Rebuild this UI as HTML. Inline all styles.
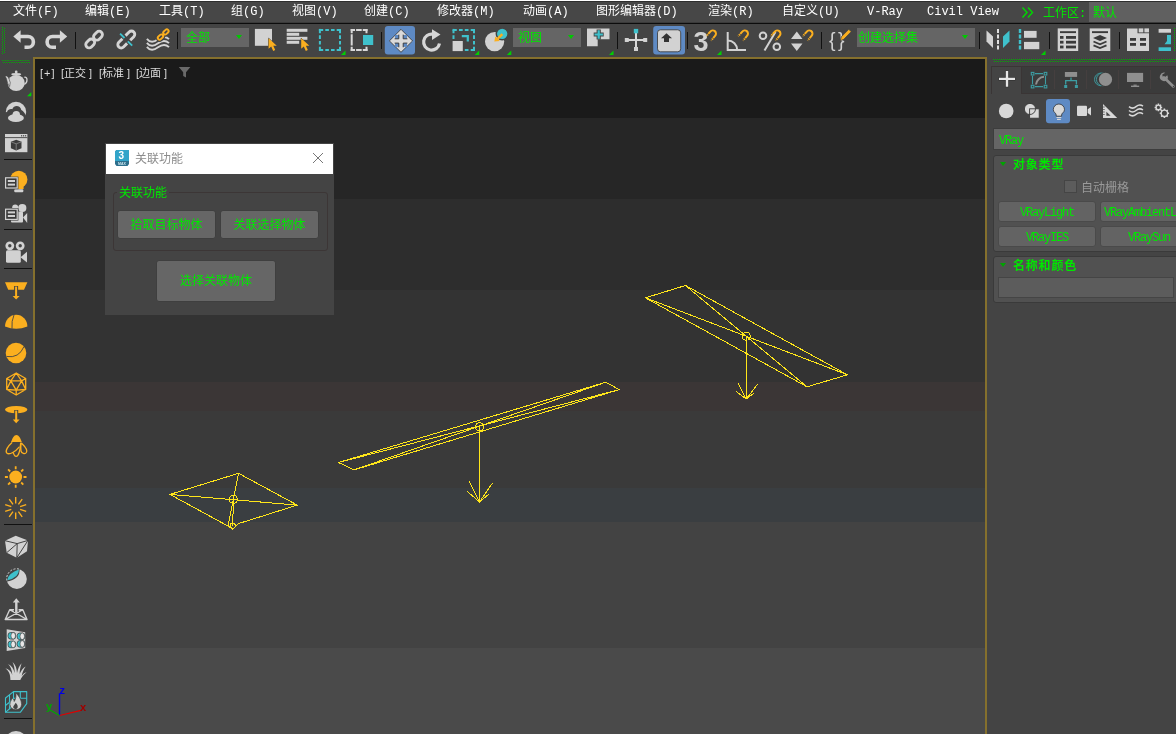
<!DOCTYPE html>
<html lang="zh-CN"><head><meta charset="utf-8"><title>3ds Max</title>
<style>
html,body{margin:0;padding:0;}
body{width:1176px;height:734px;overflow:hidden;background:#444;position:relative;
 font-family:"Liberation Mono","Noto Sans CJK SC",monospace;font-size:12px;color:#e6e6e6;line-height:14px;}
.abs{position:absolute;}
#menubar{position:absolute;left:0;top:0;width:1176px;height:22px;background:#474747;border-top:1px solid #fff;box-sizing:border-box;box-shadow:inset 0 1px 0 #2e2e2e;}
#menubar span{position:absolute;top:4px;white-space:nowrap;color:#fff;}
#menuline{position:absolute;left:0;top:22px;width:1176px;height:3px;background:linear-gradient(#3a3a3a 0 1px,#0c0c0c 1px 2px,#3c3c3c 2px 3px);}
#toolbar{position:absolute;left:0;top:24px;width:1176px;height:33px;background:#444;}
.sep{position:absolute;top:32px;width:1px;height:17px;background:#111;}
.dd{position:absolute;top:28px;height:19px;background:#656565;color:#00e800;box-sizing:border-box;padding:4px 0 0 5px;white-space:nowrap;line-height:14px;}
.dd i{position:absolute;right:7px;top:7px;border-left:3px solid transparent;border-right:3px solid transparent;border-top:4px solid #00c800;}
.tri{position:absolute;width:0;height:0;border-left:5px solid transparent;border-bottom:5px solid #00d000;}
#vpborder{position:absolute;left:33px;top:57px;width:954px;height:700px;background:#85702d;}
#vp{position:absolute;left:35px;top:59px;width:950px;height:675px;background:#1a1a1a;overflow:hidden;}
.band{position:absolute;left:0;width:950px;}
#leftbar{position:absolute;left:0;top:57px;width:33px;height:677px;background:#444;}
.hsep{position:absolute;left:4px;width:28px;height:1px;background:#111;}
#rpanel{position:absolute;left:987px;top:57px;width:189px;height:677px;background:#444;}
.g{color:#00e800;}
.btn{position:absolute;background:#636363;border:1px solid #4a4a4a;border-radius:3px;box-sizing:border-box;color:#00e800;text-align:center;white-space:nowrap;overflow:hidden;}
.sim{letter-spacing:-1.2px;}
#root{position:absolute;left:0;top:0;width:1176px;height:734px;will-change:transform;}
</style></head><body><div id="root">
<!-- MENU -->
<div id="menubar">
<span style="left:13px">文件(F)</span><span style="left:85px">编辑(E)</span><span style="left:159px">工具(T)</span><span style="left:231px">组(G)</span><span style="left:292px">视图(V)</span><span style="left:364px">创建(C)</span><span style="left:437px">修改器(M)</span><span style="left:523px">动画(A)</span><span style="left:596px">图形编辑器(D)</span><span style="left:708px">渲染(R)</span><span style="left:782px">自定义(U)</span><span style="left:867px">V-Ray</span><span style="left:927px">Civil View</span><svg class="abs" style="left:1021px;top:5px" width="14" height="13" viewBox="0 0 14 13"><path d="M1.500 1.500 L6 6.500 L1.500 11.500 M7 1.500 L11.500 6.500 L7 11.500" fill="none" stroke="#00d800" stroke-width="1.400"/></svg><span style="left:1043px;top:6px;color:#00e800">工作区:</span>
<div class="abs" style="left:1089px;top:1px;width:87px;height:20px;background:#606060"></div><span style="left:1093px;top:6px;color:#00e800">默认</span>
</div>
<div id="menuline"></div>
<div id="toolbar"></div>
<!-- TOOLBAR -->
<div id="tb">
<svg class="abs" style="left:0;top:0" width="1176" height="60" viewBox="0 0 1176 60">
<defs>
<path id="cur" d="M0 0 L0 10.5 L2.6 8.2 L4.6 12.6 L6.6 11.7 L4.7 7.4 L8.2 7.4 Z" fill="#fbaf1f"/>
<g id="mag" fill="none" stroke="#fbaf1f" stroke-width="2"><path d="M-3.2 2 V-1.2 A3.2 3.2 0 0 1 3.2 -1.2 V2"/><path d="M-3.2 2.6 V5.2 M3.2 2.6 V5.2" stroke-dasharray="1.3 1"/></g>
<path id="gt" d="M0 4.5 L4.5 0 V4.5 Z" fill="#00d000"/>
</defs>
<!-- grips -->
<g fill="#00b000">
<path d="M2 27h1v1h-1zM2 29h1v1h-1zM2 31h1v1h-1zM2 33h1v1h-1zM2 35h1v1h-1zM2 37h1v1h-1zM2 39h1v1h-1zM2 41h1v1h-1zM2 43h1v1h-1zM2 45h1v1h-1zM2 47h1v1h-1zM2 49h1v1h-1zM2 51h1v1h-1zM2 53h1v1h-1z"/>
<path d="M4 28h1v1h-1zM4 30h1v1h-1zM4 32h1v1h-1zM4 34h1v1h-1zM4 36h1v1h-1zM4 38h1v1h-1zM4 40h1v1h-1zM4 42h1v1h-1zM4 44h1v1h-1zM4 46h1v1h-1zM4 48h1v1h-1zM4 50h1v1h-1zM4 52h1v1h-1z"/>
</g>
<!-- undo / redo -->
<g fill="none" stroke="#d6d6d6" stroke-width="3.6">
<path d="M19 36.5 H28 a5.4 5.4 0 0 1 0 10.8 H24.5"/>
<path d="M61.5 36.5 H52.500 a5.4 5.4 0 0 0 0 10.8 H56"/>
</g>
<path d="M13.3 36.5 L20.6 30.3 V42.7 Z" fill="#d6d6d6"/>
<path d="M67.200 36.5 L59.9 30.3 V42.7 Z" fill="#d6d6d6"/>
<!-- link -->
<g fill="none" stroke="#d4d4d4" stroke-width="2.900">
<g transform="translate(94.100 39.600) rotate(-45)"><rect x="-10.400" y="-3.300" width="9.800" height="6.600" rx="3.300"/><rect x="0.600" y="-3.300" width="9.800" height="6.600" rx="3.300"/></g>
</g>
<!-- unlink -->
<g fill="none" stroke="#d4d4d4" stroke-width="2.900">
<g transform="translate(126.300 39.500) rotate(-45)"><path d="M-2.200 -3.300 H-7.300 a3.300 3.300 0 0 0 0 6.600 H-2.200"/><path d="M2.200 -3.300 H7.300 a3.300 3.300 0 0 1 0 6.600 H2.200"/></g>
</g>
<path d="M120.100 33.600 L124.500 38 M127.800 41.300 L132.200 45.700" stroke="#3fc1cc" stroke-width="1.900" fill="none"/>
<!-- bind space warp -->
<g fill="none" stroke="#d4d4d4" stroke-width="1.900">
<path d="M146.900 38.800 C150 42.800 154 42.300 158 39.300 S165.500 35.800 169 39.100"/>
<path d="M146.900 42.800 C150 46.800 154 46.300 158 43.300 S165.500 39.800 169 43.100"/>
<path d="M146.900 46.800 C150 50.800 154 50.300 158 47.300 S165.500 43.800 169 47.100"/>
</g>
<g fill="none" stroke="#444" stroke-width="4.200"><g transform="translate(163.200 34.500) rotate(-43)"><rect x="-6.700" y="-1.800" width="6" height="3.600" rx="1.800"/><rect x="0.700" y="-1.800" width="6" height="3.600" rx="1.800"/></g></g>
<g fill="none" stroke="#fbaf1f" stroke-width="1.900"><g transform="translate(163.200 34.500) rotate(-43)"><rect x="-6.700" y="-1.800" width="6" height="3.600" rx="1.800"/><rect x="0.700" y="-1.800" width="6" height="3.600" rx="1.800"/></g></g>
<!-- select object -->
<rect x="254.900" y="28.900" width="17.100" height="16.900" fill="#d2d2d2"/>
<use href="#cur" x="268.600" y="38.300" stroke="#444" stroke-width="1" paint-order="stroke"/>
<!-- select by name -->
<g fill="#d2d2d2"><rect x="286.700" y="28.800" width="20.700" height="3"/><rect x="286.700" y="32.800" width="12.500" height="3"/><rect x="286.700" y="36.800" width="20.700" height="3"/><rect x="286.700" y="40.800" width="12.500" height="3"/></g>
<use href="#cur" x="301.200" y="38.300" stroke="#444" stroke-width="1" paint-order="stroke"/>
<!-- rect region -->
<rect x="319.900" y="29.900" width="20.100" height="20.100" fill="none" stroke="#3fc1cc" stroke-width="2" stroke-dasharray="3.300 2.100 3.600 2.100 3.600 2.100 6.600 2.100 3.600 2.100 3.600 2.100 6.600 2.100 3.600 2.100 3.600 2.100 6.600 2.100 3.600 2.100 3.600 2.100 3.300 0"/><rect x="318.900" y="28.900" width="2" height="2" fill="#3fc1cc"/>
<use href="#gt" x="341" y="50.500"/>
<!-- window crossing -->
<path d="M351.700 29.900 H366.500 M351.700 49.900 H366.500" fill="none" stroke="#d8d8d8" stroke-width="2" stroke-linecap="square" stroke-dasharray="2.300 3.100 3.600 3.100 2.300 0"/><path d="M351.700 29.900 V49.900 M366.500 29.900 V49.900" fill="none" stroke="#d8d8d8" stroke-width="2" stroke-linecap="square" stroke-dasharray="2.300 3.100 3.600 2.100 3.600 3.100 2.300 0"/>
<rect x="362" y="34" width="12.200" height="12" fill="#444"/>
<rect x="363" y="35" width="10.200" height="10" fill="#3fc1cc"/>
<!-- move -->
<rect x="384.800" y="26" width="30.200" height="28.600" rx="3" fill="#5e8ac4"/>
<path d="M401 29.300 L412.600 40.900 L401 52.300 L389.400 40.900 Z" fill="#dadada" stroke="#333" stroke-width="0.800"/>
<g fill="#5e8ac4"><rect x="395" y="35" width="3.800" height="3.800"/><rect x="403.200" y="35" width="3.800" height="3.800"/><rect x="395" y="43.100" width="3.800" height="3.800"/><rect x="403.200" y="43.100" width="3.800" height="3.800"/></g>
<path d="M398.800 34.600 V38.800 H394.600 M403.200 34.600 V38.800 H407.400 M398.800 47.300 V43.100 H394.600 M403.200 47.300 V43.100 H407.400" fill="none" stroke="#333" stroke-width="0.900"/>
<!-- rotate -->
<path d="M439.500 43.500 A8 8 0 1 1 433 34.200" fill="none" stroke="#d6d6d6" stroke-width="3.200"/>
<path d="M432 29.300 L440.500 34.600 L432 40 Z" fill="#d6d6d6"/>
<!-- scale -->
<rect x="453.500" y="29.900" width="20.500" height="20.100" fill="none" stroke="#3fc1cc" stroke-width="2" stroke-dasharray="3.300 2.200 3.700 2.100 3.700 2.200 6.600 2.100 3.600 2.100 3.600 2.100 6.600 2.200 3.700 2.100 3.700 2.200 6.600 2.100 3.600 2.100 3.600 2.100 3.300 0"/>
<rect x="452.500" y="28.900" width="2" height="2" fill="#3fc1cc"/><rect x="451.500" y="40" width="12.500" height="12" fill="#444"/>
<rect x="452.600" y="41" width="10.200" height="10.100" fill="#d2d2d2"/>
<path d="M461.800 36.200 H467.800 V41.600" fill="none" stroke="#3fc1cc" stroke-width="2.200"/>
<use href="#gt" x="474.700" y="50.500"/>
<!-- place -->
<circle cx="494.600" cy="41.600" r="9.600" fill="#d2d2d2"/>
<circle cx="502.200" cy="33.800" r="5.900" fill="#3fc1cc" stroke="#444" stroke-width="1.500"/>
<path d="M502.400 34.200 L497.500 38.800" stroke="#fbaf1f" stroke-width="2.400"/>
<path d="M494.300 41.600 L495.300 36.400 L499.800 40.900 Z" fill="#fbaf1f"/>
<use href="#gt" x="506.800" y="50.500"/>
<!-- pivot -->
<path d="M587 28.400 H609.500 V39.200 H597.700 V46.200 H587 Z" fill="#d2d2d2"/>
<path d="M598.700 29.500 V39.500 M593.700 34.500 H603.700" stroke="#444" stroke-width="4.200"/>
<path d="M598.700 30.300 V38.700 M594.500 34.500 H602.900" stroke="#3fc1cc" stroke-width="2.200"/>
<use href="#gt" x="609" y="50.500"/>
<!-- manipulate -->
<path d="M626 40 H646 M636 31 V50" stroke="#d8d8d8" stroke-width="2"/>
<g fill="#d2d2d2"><rect x="624.800" y="38" width="4" height="4"/><rect x="643.200" y="38" width="4" height="4"/><rect x="634" y="47" width="4" height="4"/></g>
<rect x="633.800" y="28.900" width="4.400" height="4.400" fill="#3fc1cc"/>
<!-- kbd override -->
<rect x="653.200" y="26" width="31.800" height="28.600" rx="3" fill="#5e8ac4"/>
<rect x="657.500" y="29.800" width="23.200" height="22" rx="3" fill="#d2d2d2" stroke="#333" stroke-width="0.800"/>
<path d="M666.500 33.300 L672 38.300 H669 V42 H664 V38.300 H661 Z" fill="#333"/>
<!-- snaps -->
<text x="693.600" y="50.800" font-family="Liberation Sans, sans-serif" font-weight="bold" font-size="27" fill="#d2d2d2">3</text>
<use href="#mag" transform="translate(712 34.500) rotate(40)"/>
<use href="#gt" x="717" y="50.500"/>
<path d="M727.700 32 V50 H746" fill="none" stroke="#d2d2d2" stroke-width="2"/>
<path d="M727.700 40.500 A9.500 9.500 0 0 1 737.200 50" fill="none" stroke="#d2d2d2" stroke-width="2"/>
<use href="#mag" transform="translate(744 34.500) rotate(40)"/>
<g fill="none" stroke="#d2d2d2" stroke-width="2"><circle cx="763" cy="35.800" r="3.300"/><circle cx="776.800" cy="46.700" r="3.300"/><path d="M764.500 50.500 L775.500 32"/></g>
<use href="#mag" transform="translate(776.500 34.500) rotate(40)"/>
<path d="M796.800 31.500 L802.500 39 H791 Z M796.800 51 L802.500 43.400 H791 Z" fill="#d2d2d2"/>
<use href="#mag" transform="translate(808.500 34.500) rotate(40)"/>
<!-- {} -->
<text x="829" y="46.500" font-family="Liberation Sans, sans-serif" font-size="19.500" fill="#d2d2d2" letter-spacing="2.500">{}</text>
<path d="M840.200 40.800 L841.300 36.800 L848.800 29.300 L851.200 31.700 L843.800 39.300 Z" fill="#fbaf1f" stroke="#444" stroke-width="0.800"/>
<!-- mirror -->
<path d="M986.500 30.400 L993 36.500 V48 L986.500 41.500 Z" fill="#d2d2d2"/>
<path d="M998 29 V51" stroke="#e0e0e0" stroke-width="2" stroke-dasharray="4 1.500"/>
<path d="M1003 36.500 L1009.500 30.400 V41.500 L1003 48 Z" fill="#3fc1cc"/>
<!-- align -->
<path d="M1020 29 V51" stroke="#3fc1cc" stroke-width="2.400" stroke-dasharray="4 1.500"/>
<rect x="1024" y="30.900" width="12.600" height="6.900" fill="#d2d2d2"/><rect x="1024" y="41.900" width="15.300" height="7.300" fill="#d2d2d2"/>
<use href="#gt" x="1041" y="50.500"/>
<!-- scene explorer -->
<rect x="1057.700" y="28.400" width="20.500" height="22.600" fill="#d2d2d2"/>
<g fill="#3a3a3a"><rect x="1060" y="31.200" width="16" height="1.900"/><rect x="1060" y="36" width="3.500" height="2.800"/><rect x="1066" y="36" width="10" height="2.800"/><rect x="1060" y="40.800" width="3.500" height="2.800"/><rect x="1066" y="40.800" width="10" height="2.800"/><rect x="1060" y="45.600" width="3.500" height="2.800"/><rect x="1066" y="45.600" width="10" height="2.800"/></g>
<!-- layer explorer -->
<rect x="1089.700" y="28.400" width="20.600" height="22.600" fill="#d2d2d2"/>
<rect x="1092" y="31.200" width="16" height="1.900" fill="#3a3a3a"/>
<path d="M1100 35 L1107 38 L1100 41 L1093 38 Z" fill="#3a3a3a"/>
<path d="M1093.500 41.500 L1100 44.300 L1106.500 41.500 M1093.500 45.300 L1100 48.100 L1106.500 45.300" fill="none" stroke="#3a3a3a" stroke-width="1.800"/>
<!-- ribbon -->
<path d="M1127 28.400 H1137.500 V33.300 H1149 V51 H1127 Z" fill="#d2d2d2"/>
<rect x="1138.700" y="28.400" width="4.600" height="4" fill="#d2d2d2"/><rect x="1144.400" y="28.400" width="4.600" height="4" fill="#d2d2d2"/>
<g fill="#3a3a3a"><rect x="1130" y="38" width="6" height="2.800"/><rect x="1140" y="38" width="6" height="2.800"/><rect x="1130" y="43" width="6" height="2.800"/><rect x="1140" y="43" width="6" height="2.800"/></g>
<!-- curve editor -->
<rect x="1158.600" y="28.900" width="12.400" height="3.800" fill="#d2d2d2"/>
<path d="M1167 35 H1171 V44.200 H1164.500 L1167 41 Z" fill="#3fc1cc"/>
<rect x="1158.600" y="47.300" width="12.400" height="3.700" fill="#3fc1cc"/>
<g fill="#00b000"><path d="M1174 28h1v1h-1zM1174 30h1v1h-1zM1174 32h1v1h-1zM1174 34h1v1h-1zM1174 36h1v1h-1zM1174 38h1v1h-1zM1174 40h1v1h-1zM1174 42h1v1h-1zM1174 44h1v1h-1zM1174 46h1v1h-1zM1174 48h1v1h-1zM1174 50h1v1h-1z"/></g>
</svg>
<div class="sep" style="left:75px"></div><div class="sep" style="left:177px"></div><div class="sep" style="left:381px"></div><div class="sep" style="left:617px"></div><div class="sep" style="left:687px"></div><div class="sep" style="left:821px"></div><div class="sep" style="left:979px"></div><div class="sep" style="left:1049px"></div><div class="sep" style="left:1119px"></div>
<div class="dd" style="left:181px;width:68px">全部<i></i></div>
<div class="dd" style="left:513px;width:68px">视图<i></i></div>
<div class="dd" style="left:857px;width:118px;padding-left:1px">创建选择集<i></i></div>
</div>
<!-- VIEWPORT -->
<div id="vpborder"></div>
<div id="vp">
<div class="band" style="top:59px;height:81px;background:#262626"></div>
<div class="band" style="top:140px;height:91px;background:#2d2d2d"></div>
<div class="band" style="top:231px;height:92px;background:#333"></div>
<div class="band" style="top:323px;height:29px;background:#3b3636"></div>
<div class="band" style="top:352px;height:77px;background:#3a3a3a"></div>
<div class="band" style="top:429px;height:34px;background:#3a3e41"></div>
<div class="band" style="top:463px;height:126px;background:#434343"></div>
<div class="band" style="top:589px;height:90px;background:#4a4a4a"></div>
<svg class="abs" style="left:0;top:0" width="950" height="675" viewBox="35 59 950 675">
<g fill="none" stroke="#ffe61a" stroke-width="1" stroke-linejoin="round" shape-rendering="crispEdges">
<path d="M645.400 297.800 L685.500 285.500 L847.400 374.800 L807 386.800 Z M645.400 297.800 L847.400 374.800 M685.500 285.500 L807 386.800"/>
<circle cx="746.200" cy="336.200" r="4"/><path d="M746.200 336.200 V399 M737.800 382.400 L746.200 399 L757.700 384 M736.300 391.600 L746.200 399 L754.600 392.700"/>
<path d="M338.500 462.500 L354 469.900 L619.300 389.600 L605.700 382.200 Z M338.500 462.500 L619.300 389.600 M354 469.900 L605.700 382.200"/>
<circle cx="479.500" cy="426.800" r="4"/><path d="M479.500 426.800 V502 M469.100 481 L479.500 502 L492.500 483 M466.900 491.100 L479.500 502 L489.300 493.800"/>
<path d="M169.900 494.400 L238.500 473.300 L297.300 505.100 L238.800 523.500 L232.700 529.300 L228 526 Z M169.900 494.400 L297.300 505.100 M238.500 473.300 L233.400 499.400 L228 526 M233.400 499.400 L232.700 526"/>
<circle cx="233.400" cy="499.400" r="4"/><circle cx="232.700" cy="525.800" r="2.600"/>
</g>
<path d="M59.500 715.500 V693.300" stroke="#0000e6" stroke-width="1.400"/><path d="M59.500 715.500 L81 710.300" stroke="#e00000" stroke-width="1.200"/><path d="M59.500 715.500 L50 710" stroke="#00a800" stroke-width="1.200"/>
<g font-family="Liberation Sans, sans-serif" font-size="11" font-weight="bold"><text x="59.600" y="694.200" fill="#0000e6">z</text><text x="80" y="711" fill="#a00000">x</text><text x="46" y="709.500" fill="#00a800">y</text></g>
<path d="M178.800 67 H190.400 L186 72.200 V77.600 L183.200 76 V72.200 Z" fill="#6a6a6a"/>
</svg>
<span class="abs" style="font-family:'Liberation Sans','Noto Sans CJK SC',sans-serif;font-size:11px;color:#dcdcdc;line-height:13px;white-space:nowrap;top:8px;left:5px;letter-spacing:1px">[+]</span><span class="abs" style="font-family:'Liberation Sans','Noto Sans CJK SC',sans-serif;font-size:11px;color:#dcdcdc;line-height:13px;white-space:nowrap;top:8px;left:26px">[正交 ]</span><span class="abs" style="font-family:'Liberation Sans','Noto Sans CJK SC',sans-serif;font-size:11px;color:#dcdcdc;line-height:13px;white-space:nowrap;top:8px;left:64px">[标准 ]</span><span class="abs" style="font-family:'Liberation Sans','Noto Sans CJK SC',sans-serif;font-size:11px;color:#dcdcdc;line-height:13px;white-space:nowrap;top:8px;left:101px">[边面 ]</span>
<div class="abs" style="left:70px;top:84px;width:229px;height:172px;background:#444;"></div>
<div class="abs" style="left:71px;top:85px;width:227px;height:30px;background:#fff;"></div>
<svg class="abs" style="left:80px;top:91px" width="14" height="16" viewBox="0 0 14 16"><path d="M1.500 0 H14 V14 L12.500 16 H1.500 L0 14 V1.500 Z" fill="#2d6f8c"/><path d="M1.500 0 H14 V11 H0 V1.500 Z" fill="#31a4c9"/><text x="3.400" y="9.300" font-family="Liberation Sans, sans-serif" font-weight="bold" font-size="10" fill="#fff">3</text><text x="3" y="14.700" font-family="Liberation Sans, sans-serif" font-weight="bold" font-size="3.500" fill="#cfe6ee">MAX</text></svg>
<div class="abs" style="left:100px;top:92px;color:#8c8c8c;font-family:'Noto Sans CJK SC',sans-serif;line-height:14px">关联功能</div>
<svg class="abs" style="left:278px;top:94px" width="10" height="10" viewBox="0 0 10 10"><path d="M0 0 L10 10 M10 0 L0 10" stroke="#777" stroke-width="1"/></svg>
<div class="abs" style="left:78px;top:133px;width:215px;height:59px;border:1px solid #3c3636;border-radius:3px;box-sizing:border-box"></div>
<div class="abs g" style="left:82px;top:128px;background:#444;padding:0 2px;line-height:14px">关联功能</div>
<div class="btn" style="left:82px;top:151px;width:99px;height:29px;line-height:30px;background:#666;border-color:#3f3f3f">拾取目标物体</div>
<div class="btn" style="left:185px;top:151px;width:99px;height:29px;line-height:30px;background:#666;border-color:#3f3f3f">关联选择物体</div>
<div class="btn" style="left:121px;top:201px;width:120px;height:42px;line-height:43px;background:#666;border-color:#3f3f3f">选择关联物体</div>
</div>
<div id="leftbar"></div>
<div id="lb">
<svg class="abs" style="left:0;top:0" width="36" height="734" viewBox="0 0 36 734">
<path d="M2 60h1v1h-1zM4 60h1v1h-1zM6 60h1v1h-1zM8 60h1v1h-1zM10 60h1v1h-1zM12 60h1v1h-1zM14 60h1v1h-1zM16 60h1v1h-1zM18 60h1v1h-1zM20 60h1v1h-1zM22 60h1v1h-1zM24 60h1v1h-1zM26 60h1v1h-1zM28 60h1v1h-1zM3 62h1v1h-1zM5 62h1v1h-1zM7 62h1v1h-1zM9 62h1v1h-1zM11 62h1v1h-1zM13 62h1v1h-1zM15 62h1v1h-1zM17 62h1v1h-1zM19 62h1v1h-1zM21 62h1v1h-1zM23 62h1v1h-1zM25 62h1v1h-1zM27 62h1v1h-1zM29 62h1v1h-1z" fill="#00b000"/>
<g fill="#d2d2d2"><ellipse cx="16.200" cy="83" rx="8.500" ry="8"/><ellipse cx="16.200" cy="74.300" rx="5" ry="1.300"/><circle cx="16.200" cy="72" r="1.400"/><path d="M9.600 86.500 C6.500 83.500 7.500 78.500 5 76.300 L6.800 75.900 C9.500 77.500 9.300 81 10.300 82.500 Z" stroke="#444" stroke-width="0.600"/></g><path d="M24.300 77.300 C27.800 76.300 28 82.500 24.300 84.500" fill="none" stroke="#d2d2d2" stroke-width="1.300"/>
<path d="M27 96.300 L31.300 92 V96.300 Z" fill="#00d000"/>
<circle cx="16" cy="112" r="10.200" fill="#d2d2d2"/><path d="M4.500 112.400 L7 112 C8 109.500 10 108.800 12.300 109.200 C13 106.800 15 106 16.500 106 C19 106 20.800 107.500 21.300 110 C23.500 111 25 113.500 26.400 116.500 L27 124 H4.500 Z" fill="#444"/><ellipse cx="15.900" cy="118" rx="8" ry="4" fill="#d2d2d2"/><circle cx="16.300" cy="114.700" r="3.700" fill="#d2d2d2"/>
<rect x="5" y="134" width="22.400" height="18.200" fill="#d2d2d2"/><rect x="5" y="137.200" width="22.400" height="0.900" fill="#444"/><g fill="#444"><rect x="21" y="135.200" width="1.200" height="1.200"/><rect x="23" y="135.200" width="1.200" height="1.200"/><rect x="25" y="135.200" width="1.200" height="1.200"/></g><path d="M16.200 139.800 L21.500 141.800 V148.300 L16.200 150.600 L10.900 148.300 V141.800 Z" fill="#3c3c3c"/><path d="M10.900 141.800 L16.200 143.800 L21.500 141.800 M16.200 143.800 V150.600" stroke="#8a8a8a" stroke-width="0.800" fill="none"/>
<circle cx="18.800" cy="179.400" r="8.600" fill="#fbaf1f"/><path d="M14 184 H23.600 V189 H14 Z" fill="#fbaf1f"/><rect x="14.200" y="189.300" width="9.200" height="3" rx="1.200" fill="#d2d2d2"/><rect x="4.400" y="176.600" width="14" height="12.600" fill="#444"/><rect x="5.600" y="177.800" width="11.600" height="10.200" fill="#3a3a3a" stroke="#d2d2d2" stroke-width="1.200"/><rect x="7.800" y="180" width="7.200" height="2" fill="#d2d2d2"/><rect x="7.800" y="183.600" width="7.200" height="2" fill="#d2d2d2"/>
<g fill="#d2d2d2"><circle cx="22.300" cy="208" r="4.100"/><circle cx="15.200" cy="207.400" r="3"/><rect x="11" y="211.500" width="12" height="11" rx="1"/><path d="M23 217.500 L27.200 213 V223 Z"/></g><rect x="4.400" y="208" width="14" height="12.600" fill="#444"/><rect x="5.600" y="209.200" width="11.600" height="10.200" fill="#3a3a3a" stroke="#d2d2d2" stroke-width="1.200"/><rect x="7.800" y="211.400" width="7.200" height="2" fill="#d2d2d2"/><rect x="7.800" y="215" width="7.200" height="2" fill="#d2d2d2"/>
<g fill="#d2d2d2"><circle cx="9.800" cy="245.800" r="4.400"/><circle cx="20.200" cy="245.800" r="4.400"/><rect x="6" y="250.200" width="14.800" height="12.600" rx="1.500"/><path d="M20.500 257.200 L27 251.800 V262.400 Z"/></g><g fill="#444"><circle cx="9.800" cy="245.800" r="1.700"/><circle cx="20.200" cy="245.800" r="1.700"/></g>
<path d="M5 282.200 H27.400 L24 289.800 H8.200 Z" fill="#fbaf1f"/><path d="M16.100 286 V296" stroke="#444" stroke-width="4"/><path d="M16.100 286.600 V297" stroke="#fbaf1f" stroke-width="2"/><path d="M12.600 296 H19.600 L16.100 299.600 Z" fill="#fbaf1f"/>
<path d="M5 326.500 A11.200 11.700 0 0 1 27.400 326.500 Q16.200 331.200 5 326.500 Z" fill="#fbaf1f"/><path d="M14 315 Q11.300 321 12 328.600" fill="none" stroke="#444" stroke-width="0.900"/>
<circle cx="16" cy="353" r="10.300" fill="#fbaf1f"/><path d="M6.500 356.500 Q19 358.500 24 346.500" fill="none" stroke="#444" stroke-width="0.900"/>
<path d="M16.2 373.0 L25.7 378.5 L25.7 389.5 L16.2 395.0 L6.7 389.5 L6.7 378.5 Z M21.6 380.9 L16.2 390.2 L10.8 380.9 Z M16.2 373.0 L21.6 380.9 M16.2 373.0 L10.8 380.9 M25.7 378.5 L21.6 380.9 M25.7 389.5 L21.6 380.9 M25.7 389.5 L16.2 390.2 M16.2 395.0 L16.2 390.2 M6.7 389.5 L16.2 390.2 M6.7 389.5 L10.8 380.9 M6.7 378.5 L10.8 380.9 " fill="none" stroke="#fbaf1f" stroke-width="1.300" stroke-linejoin="round"/>
<ellipse cx="16.200" cy="409.600" rx="11.200" ry="3.700" fill="#fbaf1f"/><path d="M16.200 410 V420" stroke="#444" stroke-width="4"/><path d="M16.200 410.600 V420.500" stroke="#fbaf1f" stroke-width="2"/><path d="M12.800 419.600 H19.600 L16.200 423.300 Z" fill="#fbaf1f"/>
<path d="M11 442 C12.500 438 14 434.900 16.400 434.900 C18.800 434.900 20.300 438 21.800 442 Z" fill="#fbaf1f"/><g fill="none" stroke="#fbaf1f" stroke-width="1.300" stroke-linecap="round"><path d="M11.800 442.700 C8 446 4.800 451 6.800 453 C9.500 455.500 16 451 19.100 447.100"/><path d="M13.200 452.600 C14 455 15.500 456.600 16.300 456.400 C18.500 456 20.500 450 20.600 443.200"/><path d="M21.600 443.200 C24.500 446 27.700 450.500 26.400 452.500 C25 454.500 21.500 453.500 21 451 C20.600 449 20.800 446 20.900 443.500"/></g>
<circle cx="15.700" cy="477" r="6.400" fill="#fbaf1f"/><path d="M15.7 469.2 L15.7 466.2 M21.2 471.5 L23.3 469.4 M23.5 477.0 L26.5 477.0 M21.2 482.5 L23.3 484.6 M15.7 484.8 L15.7 487.8 M10.2 482.5 L8.1 484.6 M7.9 477.0 L4.9 477.0 M10.2 471.5 L8.1 469.4 " stroke="#fbaf1f" stroke-width="1.800" fill="none"/>
<path d="M15.7 503.4 L15.7 497.0 M18.4 504.3 L22.2 499.1 M20.1 506.6 L26.2 504.6 M20.1 509.4 L26.2 511.4 M18.4 511.7 L22.2 516.9 M15.7 512.6 L15.7 519.0 M13.0 511.7 L9.2 516.9 M11.3 509.4 L5.2 511.4 M11.3 506.6 L5.2 504.6 M13.0 504.3 L9.2 499.1 " stroke="#fbaf1f" stroke-width="1.400" fill="none"/>
<path d="M5 540.700 L15.700 535.800 L28 540.400 L27 551.200 L16.800 557.700 L6.700 552.700 Z" fill="#d2d2d2"/><path d="M5 540.700 L17.200 543.600 L28 540.400 M17.200 543.600 L16.800 557.700 M6.700 552.700 L17.200 543.600 M16.800 557.700 L28 540.400" fill="none" stroke="#333" stroke-width="0.900"/>
<circle cx="16.800" cy="579" r="10" fill="#d2d2d2"/><path d="M6.300 581.500 A10.500 10.500 0 0 1 19.500 568.700 Q20.500 579.500 6.300 581.500 Z" fill="#444"/><path d="M6.800 580.500 A10 10 0 0 1 19.500 569.200" fill="none" stroke="#d2d2d2" stroke-width="1" stroke-dasharray="2 1.500"/><path d="M7.200 580.300 Q8.500 573 19 569.600 Q19 578 7.200 580.300 Z" fill="#3fc1cc"/>
<path d="M9.700 609.700 H22.800 L27 619.500 H5.200 Z M9.700 609.700 L27 619.500 M22.800 609.700 L5.200 619.500" fill="none" stroke="#d2d2d2" stroke-width="1.400" stroke-linejoin="round"/><path d="M16.300 601 V612" stroke="#444" stroke-width="4.500"/><path d="M16.300 601.500 V612.500" stroke="#d2d2d2" stroke-width="2.400"/><path d="M12.800 602.600 L16.300 598.200 L19.800 602.600 Z" fill="#d2d2d2"/>
<path d="M6.700 629.200 L25.200 632.200 V648 L6.700 651 Z" fill="#d2d2d2"/>
<rect x="8.1" y="632.5" width="7.600" height="6.600" rx="2.600" fill="#3fc1cc" stroke="#333" stroke-width="0.700"/><ellipse cx="13.2" cy="635.8" rx="2.300" ry="3.300" fill="#e8e8e8" stroke="#333" stroke-width="0.600"/>
<rect x="17.2" y="633.0" width="7.600" height="6.600" rx="2.600" fill="#3fc1cc" stroke="#333" stroke-width="0.700"/><ellipse cx="22.3" cy="636.3" rx="2.300" ry="3.300" fill="#e8e8e8" stroke="#333" stroke-width="0.600"/>
<rect x="8.1" y="641.1" width="7.600" height="6.600" rx="2.600" fill="#3fc1cc" stroke="#333" stroke-width="0.700"/><ellipse cx="13.2" cy="644.4" rx="2.300" ry="3.300" fill="#e8e8e8" stroke="#333" stroke-width="0.600"/>
<rect x="17.2" y="640.6" width="7.600" height="6.600" rx="2.600" fill="#3fc1cc" stroke="#333" stroke-width="0.700"/><ellipse cx="22.3" cy="643.9" rx="2.300" ry="3.300" fill="#e8e8e8" stroke="#333" stroke-width="0.600"/>
<path d="M10.400 680 C10.500 674 8.500 670.500 5.400 668.200 C9 669 11.300 671.500 12.300 675 C12 670 10.500 666.500 8.100 664.100 C11.500 665.500 13.800 669 14.600 673 C14.800 668.500 14 665 12.600 661.900 C15.500 664.500 16.800 668.500 17 673 C17.800 669 19.300 665.500 21.600 663.200 C20.300 667 19.700 670.500 19.600 674 C21 670.500 23 668 25.700 666.400 C23.500 669.500 22.300 672.500 21.700 676 C23 674 24.500 672.800 26.600 672.200 C23.500 674.500 21.500 677 20.300 680 Z" fill="#d2d2d2"/>
<g fill="none" stroke="#3fc1cc" stroke-width="1.100" stroke-linejoin="round"><path d="M5.500 698 L13.500 691.600 H26.700 V703.700 L20.300 712.300 H5.500 Z"/><path d="M9.500 694.800 V709.500 M5.500 705.500 L13.500 699 M13.500 691.600 V699 M5.500 712.300 L12 706.500 M13.500 698.300 H26.700 M20.300 691.600 V698.300"/></g><path d="M15.800 692.900 C18.500 695.500 21.600 699.500 21.600 704.500 A5.900 5.900 0 0 1 9.900 704.500 C9.900 701.500 11.500 700.500 12.200 698 C13.600 699 14.200 700.500 14.200 701.500 C15.700 699.500 16.300 696 15.800 692.900 Z" fill="#d2d2d2" stroke="#444" stroke-width="0.700"/><path d="M15.700 702.800 C17.300 704.500 18.200 706 17.500 708 A2.400 2.400 0 0 1 13.200 707.500 C13 705.800 14.900 704.800 15.700 702.800 Z" fill="#444"/>
<circle cx="16" cy="742.500" r="11.500" fill="#d2d2d2"/>
</svg>
<div class="hsep" style="top:159px"></div>
<div class="hsep" style="top:229px"></div>
<div class="hsep" style="top:268px"></div>
<div class="hsep" style="top:524px"></div>
<div class="hsep" style="top:718px"></div>
</div>
<div id="rpanel"></div>
<div id="rp">
<div class="abs" style="left:991px;top:66px;width:185px;height:28px;background:#3b3b3b;border-top:1px solid #3a3535;border-bottom:1px solid #3a3535;box-sizing:border-box"></div>
<div class="abs" style="left:991px;top:66px;width:31px;height:28px;background:#444;border:1px solid #3a3535;border-bottom:none;box-sizing:border-box"></div>
<div class="abs" style="left:1054px;top:70px;width:1px;height:19px;background:#453f3f"></div>
<div class="abs" style="left:1086px;top:70px;width:1px;height:19px;background:#453f3f"></div>
<div class="abs" style="left:1118px;top:70px;width:1px;height:19px;background:#453f3f"></div>
<div class="abs" style="left:1150px;top:70px;width:1px;height:19px;background:#453f3f"></div>
<svg class="abs" style="left:987px;top:57px" width="189" height="80" viewBox="987 57 189 80">
<path d="M993 59h1v1h-1zM995 59h1v1h-1zM997 59h1v1h-1zM999 59h1v1h-1zM1001 59h1v1h-1zM1003 59h1v1h-1zM1005 59h1v1h-1zM1007 59h1v1h-1zM1009 59h1v1h-1zM1011 59h1v1h-1zM1013 59h1v1h-1zM1015 59h1v1h-1zM1017 59h1v1h-1zM1019 59h1v1h-1zM1021 59h1v1h-1zM1023 59h1v1h-1zM1025 59h1v1h-1zM1027 59h1v1h-1zM1029 59h1v1h-1zM1031 59h1v1h-1zM1033 59h1v1h-1zM1035 59h1v1h-1zM1037 59h1v1h-1zM1039 59h1v1h-1zM1041 59h1v1h-1zM1043 59h1v1h-1zM1045 59h1v1h-1zM1047 59h1v1h-1zM1049 59h1v1h-1zM1051 59h1v1h-1zM1053 59h1v1h-1zM1055 59h1v1h-1zM1057 59h1v1h-1zM1059 59h1v1h-1zM1061 59h1v1h-1zM1063 59h1v1h-1zM1065 59h1v1h-1zM1067 59h1v1h-1zM1069 59h1v1h-1zM1071 59h1v1h-1zM1073 59h1v1h-1zM1075 59h1v1h-1zM1077 59h1v1h-1zM1079 59h1v1h-1zM1081 59h1v1h-1zM1083 59h1v1h-1zM1085 59h1v1h-1zM1087 59h1v1h-1zM1089 59h1v1h-1zM1091 59h1v1h-1zM1093 59h1v1h-1zM1095 59h1v1h-1zM1097 59h1v1h-1zM1099 59h1v1h-1zM1101 59h1v1h-1zM1103 59h1v1h-1zM1105 59h1v1h-1zM1107 59h1v1h-1zM1109 59h1v1h-1zM1111 59h1v1h-1zM1113 59h1v1h-1zM1115 59h1v1h-1zM1117 59h1v1h-1zM1119 59h1v1h-1zM1121 59h1v1h-1zM1123 59h1v1h-1zM1125 59h1v1h-1zM1127 59h1v1h-1zM1129 59h1v1h-1zM1131 59h1v1h-1zM1133 59h1v1h-1zM1135 59h1v1h-1zM1137 59h1v1h-1zM1139 59h1v1h-1zM1141 59h1v1h-1zM1143 59h1v1h-1zM1145 59h1v1h-1zM1147 59h1v1h-1zM1149 59h1v1h-1zM1151 59h1v1h-1zM1153 59h1v1h-1zM1155 59h1v1h-1zM1157 59h1v1h-1zM1159 59h1v1h-1zM1161 59h1v1h-1zM1163 59h1v1h-1zM1165 59h1v1h-1zM1167 59h1v1h-1zM1169 59h1v1h-1zM1171 59h1v1h-1zM1173 59h1v1h-1zM1175 59h1v1h-1zM994 61h1v1h-1zM996 61h1v1h-1zM998 61h1v1h-1zM1000 61h1v1h-1zM1002 61h1v1h-1zM1004 61h1v1h-1zM1006 61h1v1h-1zM1008 61h1v1h-1zM1010 61h1v1h-1zM1012 61h1v1h-1zM1014 61h1v1h-1zM1016 61h1v1h-1zM1018 61h1v1h-1zM1020 61h1v1h-1zM1022 61h1v1h-1zM1024 61h1v1h-1zM1026 61h1v1h-1zM1028 61h1v1h-1zM1030 61h1v1h-1zM1032 61h1v1h-1zM1034 61h1v1h-1zM1036 61h1v1h-1zM1038 61h1v1h-1zM1040 61h1v1h-1zM1042 61h1v1h-1zM1044 61h1v1h-1zM1046 61h1v1h-1zM1048 61h1v1h-1zM1050 61h1v1h-1zM1052 61h1v1h-1zM1054 61h1v1h-1zM1056 61h1v1h-1zM1058 61h1v1h-1zM1060 61h1v1h-1zM1062 61h1v1h-1zM1064 61h1v1h-1zM1066 61h1v1h-1zM1068 61h1v1h-1zM1070 61h1v1h-1zM1072 61h1v1h-1zM1074 61h1v1h-1zM1076 61h1v1h-1zM1078 61h1v1h-1zM1080 61h1v1h-1zM1082 61h1v1h-1zM1084 61h1v1h-1zM1086 61h1v1h-1zM1088 61h1v1h-1zM1090 61h1v1h-1zM1092 61h1v1h-1zM1094 61h1v1h-1zM1096 61h1v1h-1zM1098 61h1v1h-1zM1100 61h1v1h-1zM1102 61h1v1h-1zM1104 61h1v1h-1zM1106 61h1v1h-1zM1108 61h1v1h-1zM1110 61h1v1h-1zM1112 61h1v1h-1zM1114 61h1v1h-1zM1116 61h1v1h-1zM1118 61h1v1h-1zM1120 61h1v1h-1zM1122 61h1v1h-1zM1124 61h1v1h-1zM1126 61h1v1h-1zM1128 61h1v1h-1zM1130 61h1v1h-1zM1132 61h1v1h-1zM1134 61h1v1h-1zM1136 61h1v1h-1zM1138 61h1v1h-1zM1140 61h1v1h-1zM1142 61h1v1h-1zM1144 61h1v1h-1zM1146 61h1v1h-1zM1148 61h1v1h-1zM1150 61h1v1h-1zM1152 61h1v1h-1zM1154 61h1v1h-1zM1156 61h1v1h-1zM1158 61h1v1h-1zM1160 61h1v1h-1zM1162 61h1v1h-1zM1164 61h1v1h-1zM1166 61h1v1h-1zM1168 61h1v1h-1zM1170 61h1v1h-1zM1172 61h1v1h-1zM1174 61h1v1h-1z" fill="#00b000"/>
<path d="M998.600 78.900 H1015.300 M1007 70.700 V87.200" stroke="#333" stroke-width="3.800"/><path d="M999 78.900 H1015 M1007 71.100 V86.800" stroke="#e6e6e6" stroke-width="2.400"/>
<g fill="none" stroke="#3d9da3" stroke-width="1.100"><path d="M1035 73.600 H1043 M1035 86.600 H1043 M1032.500 76 V84.200 M1045.500 76 V84.200"/><rect x="1031.300" y="72.400" width="2.600" height="2.600"/><rect x="1044.200" y="72.400" width="2.600" height="2.600"/><rect x="1031.300" y="85.300" width="2.600" height="2.600"/><rect x="1044.200" y="85.300" width="2.600" height="2.600"/></g><path d="M1036 84.500 A8.500 8.500 0 0 1 1044 76.800" fill="none" stroke="#8f8f8f" stroke-width="2"/>
<rect x="1064.900" y="72" width="12.200" height="4.900" fill="#8f8f8f"/><path d="M1071 77.500 V80.700 M1065.700 84.500 V80.700 H1076.400 V84.500" fill="none" stroke="#3d9da3" stroke-width="1.300"/><rect x="1064.200" y="85" width="3" height="3" fill="#3d9da3"/><rect x="1074.900" y="85" width="3" height="3" fill="#3d9da3"/>
<g fill="none" stroke="#3d9da3" stroke-width="0.900"><circle cx="1100.800" cy="79.400" r="6.300"/><circle cx="1102.800" cy="79.400" r="6.400"/></g><circle cx="1105.500" cy="79.400" r="7.400" fill="#3b3b3b"/><circle cx="1105.500" cy="79.400" r="6.600" fill="#8f8f8f"/>
<rect x="1127" y="72.900" width="16.100" height="9.100" fill="#8f8f8f"/><rect x="1131" y="85.600" width="8.200" height="1.400" fill="#8f8f8f"/><rect x="1133.500" y="84.600" width="3.200" height="1.200" fill="#8f8f8f"/>
<path d="M1164 77.500 L1173.400 86.400" stroke="#8f8f8f" stroke-width="2.700" stroke-linecap="round"/><path d="M1165.300 72.800 A4.200 4.200 0 1 0 1167.500 79.200 A4.200 4.200 0 0 0 1167.300 75.200 L1164.700 77.300 L1162.600 76.600 L1162.300 74.600 Z" fill="#8f8f8f"/><circle cx="1173.500" cy="86.500" r="0.700" fill="#3b3b3b"/>
<circle cx="1006.200" cy="111" r="7.300" fill="#d8d8d8"/>
<circle cx="1030" cy="109" r="5.600" fill="#d8d8d8" stroke="#3a3a3a" stroke-width="0.900"/><rect x="1029.600" y="108.800" width="9.600" height="9.400" fill="#d8d8d8" stroke="#3a3a3a" stroke-width="0.900"/><path d="M1029.600 114.500 A5.600 5.600 0 0 0 1035.500 108.800" fill="none" stroke="#3a3a3a" stroke-width="0.900"/>
<rect x="1046" y="99" width="24" height="24.200" rx="3" fill="#5e8ac4"/><path d="M1056.200 116.200 V115 C1056.200 113 1053.300 112.500 1053.300 109.600 A5.600 5.600 0 0 1 1064.500 109.600 C1064.500 112.500 1061.600 113 1061.600 115 V116.200 Z" fill="#d8d8d8" stroke="#333" stroke-width="0.800"/><path d="M1056.500 117.500 H1061.300 M1057 119.300 H1060.800" stroke="#d8d8d8" stroke-width="1.200"/>
<rect x="1077" y="105.800" width="10" height="10.200" rx="1" fill="#d8d8d8"/><path d="M1087.700 109.300 L1091 107 V115.600 L1087.700 113 Z" fill="#d8d8d8"/>
<path d="M1103 104 V118 H1117.200 Z" fill="#d8d8d8"/><path d="M1106.400 111.800 V115.700 H1110.600 Z" fill="#444"/><path d="M1103 107 h1.800 M1103 109.500 h1.800 M1103 112 h1.800 M1103 114.500 h1.800" stroke="#444" stroke-width="0.700"/>
<path d="M1129 106.60000000000001 q3.500 3 7 0 t7 -0.500" fill="none" stroke="#d8d8d8" stroke-width="1.500"/>
<path d="M1129 110.5 q3.500 3 7 0 t7 -0.500" fill="none" stroke="#d8d8d8" stroke-width="1.500"/>
<path d="M1129 114.4 q3.500 3 7 0 t7 -0.500" fill="none" stroke="#d8d8d8" stroke-width="1.500"/>
<circle cx="1158.4" cy="107.4" r="2.3" fill="none" stroke="#d8d8d8" stroke-width="1.400"/><path d="M1160.7 107.4 L1162.2 107.4 M1160.0 109.0 L1161.1 110.1 M1158.4 109.7 L1158.4 111.2 M1156.8 109.0 L1155.7 110.1 M1156.1 107.4 L1154.6 107.4 M1156.8 105.8 L1155.7 104.7 M1158.4 105.1 L1158.4 103.6 M1160.0 105.8 L1161.1 104.7 " stroke="#d8d8d8" stroke-width="1.500"/>
<circle cx="1164.4" cy="113.3" r="3.2" fill="none" stroke="#d8d8d8" stroke-width="1.400"/><path d="M1167.6 113.3 L1169.1 113.3 M1166.7 115.6 L1167.7 116.6 M1164.4 116.5 L1164.4 118.0 M1162.1 115.6 L1161.1 116.6 M1161.2 113.3 L1159.7 113.3 M1162.1 111.0 L1161.1 110.0 M1164.4 110.1 L1164.4 108.6 M1166.7 111.0 L1167.7 110.0 " stroke="#d8d8d8" stroke-width="1.500"/>
</svg>
<div class="abs sim g" style="left:993px;top:128px;width:190px;height:22px;background:#656565;border:1px solid #3d3d3d;box-sizing:border-box;padding:6px 0 0 5px;line-height:12px">VRay</div>
<div class="abs" style="left:993px;top:155px;width:190px;height:97px;background:#515151;border:1px solid #3a3a3a;border-radius:3px;box-sizing:border-box"></div>
<div class="abs" style="left:1000px;top:162px;width:0;height:0;border-left:3px solid transparent;border-right:3px solid transparent;border-top:4px solid #00a400"></div>
<div class="abs g" style="left:1013px;top:159px;font-weight:bold;letter-spacing:0.8px;line-height:14px">对象类型</div>
<div class="abs" style="left:1064px;top:180px;width:13px;height:13px;background:#5c5c5c;border:1px solid #454545;box-sizing:border-box"></div>
<div class="abs" style="left:1081px;top:182px;color:#9a9a9a;line-height:14px">自动栅格</div>
<div class="btn sim" style="left:998px;top:201px;width:98px;height:21px;line-height:23px">VRayLight</div>
<div class="btn sim" style="left:1100px;top:201px;width:98px;height:21px;line-height:23px;text-align:left;padding-left:3px">VRayAmbientLight</div>
<div class="btn sim" style="left:998px;top:226px;width:98px;height:21px;line-height:23px">VRayIES</div>
<div class="btn sim" style="left:1100px;top:226px;width:98px;height:21px;line-height:23px">VRaySun</div>
<div class="abs" style="left:993px;top:256px;width:190px;height:47px;background:#515151;border:1px solid #3a3a3a;border-radius:3px;box-sizing:border-box"></div>
<div class="abs" style="left:1000px;top:263px;width:0;height:0;border-left:3px solid transparent;border-right:3px solid transparent;border-top:4px solid #00a400"></div>
<div class="abs g" style="left:1013px;top:260px;font-weight:bold;letter-spacing:0.8px;line-height:14px">名称和颜色</div>
<div class="abs" style="left:998px;top:277px;width:176px;height:21px;background:#5c5c5c;border:1px solid #454545;box-sizing:border-box"></div>
</div>
</div></body></html>
